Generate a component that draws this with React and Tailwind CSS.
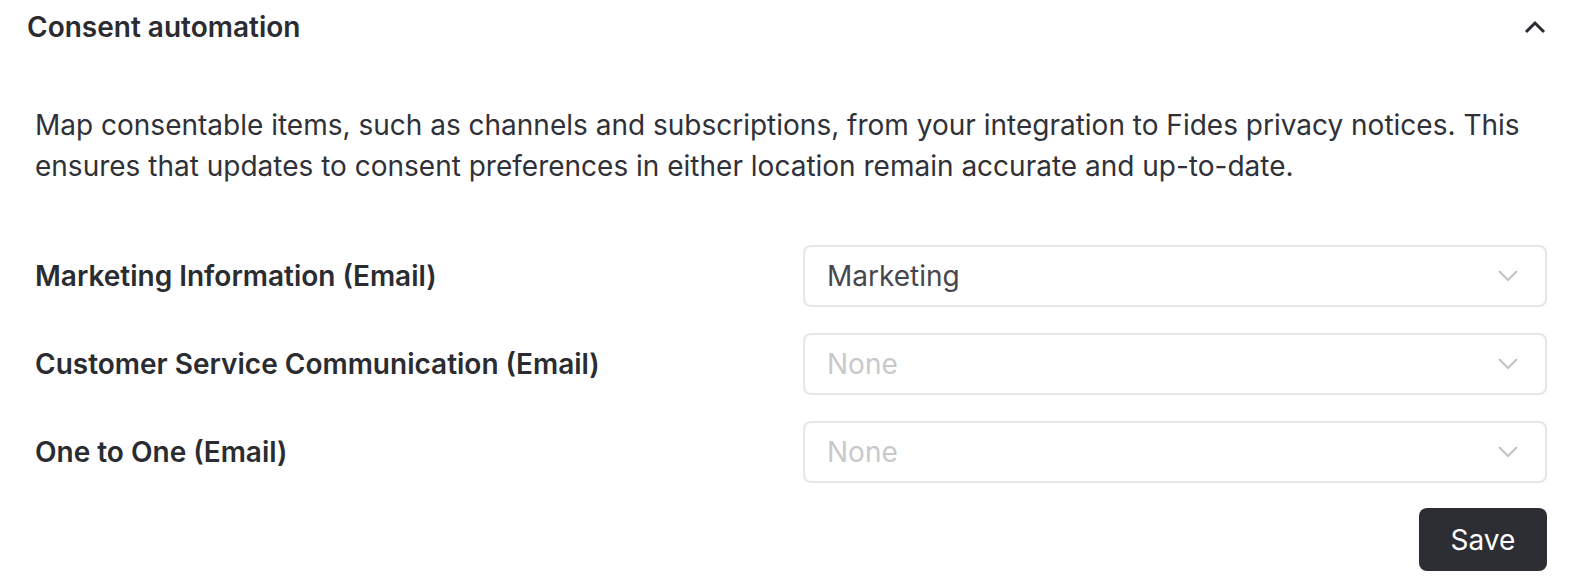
const rows = [
  { label: 'Marketing Information (Email)', value: 'Marketing' },
  { label: 'Customer Service Communication (Email)', value: null },
  { label: 'One to One (Email)', value: null },
]

function ChevronDown() {
  return (
    <svg width="22" height="14" viewBox="0 0 22 14" fill="none" className="text-[#c4c4c8]">
      <path d="M2 2l9 9 9-9" stroke="currentColor" strokeWidth="2" />
    </svg>
  )
}

function SelectBox({ value }) {
  return (
    <div className="w-[744px] h-[62px] rounded-[8px] border-2 border-[#e6e6e8] bg-white flex items-center justify-between pl-[22px] pr-[26px]">
      {value ? (
        <span className="text-[28px] text-[#46474e]">{value}</span>
      ) : (
        <span className="text-[28px] text-[#c9c9cc]">None</span>
      )}
      <ChevronDown />
    </div>
  )
}

export default function App() {
  return (
    <div className="w-[1570px] h-[586px] bg-white text-[#2b2c31]" style={{ fontFamily: 'Inter, "Noto Sans", sans-serif' }}>
      {/* Header */}
      <div className="flex items-center justify-between pl-[27px] pr-[24px] pt-[8px] h-[46px]">
        <h2 className="text-[28px] font-semibold">Consent automation</h2>
        <svg width="22" height="14" viewBox="0 0 22 14" fill="none" className="text-[#2b2c31]">
          <path d="M2 12l9-9 9 9" stroke="currentColor" strokeWidth="3" />
        </svg>
      </div>

      <div className="pl-[35px] pr-[25px]">
        <p className="mt-[59px] text-[28px] leading-[41px] text-[#303138]">
          Map consentable items, such as channels and subscriptions, from your integration to Fides privacy notices. This
          ensures that updates to consent preferences in either location remain accurate and up-to-date.
        </p>

        <div className="mt-[58px] flex flex-col gap-[26px] -mr-[2px]">
          {rows.map(r => (
            <div key={r.label} className="flex items-center justify-between">
              <span className="text-[28px] font-semibold">{r.label}</span>
              <SelectBox value={r.value} />
            </div>
          ))}
        </div>

        <div className="flex justify-end mt-[25px] -mr-[2px]">
          <button className="w-[128px] h-[63px] rounded-[8px] bg-[#2d2e33] text-white text-[28px]">Save</button>
        </div>
      </div>
    </div>
  )
}
